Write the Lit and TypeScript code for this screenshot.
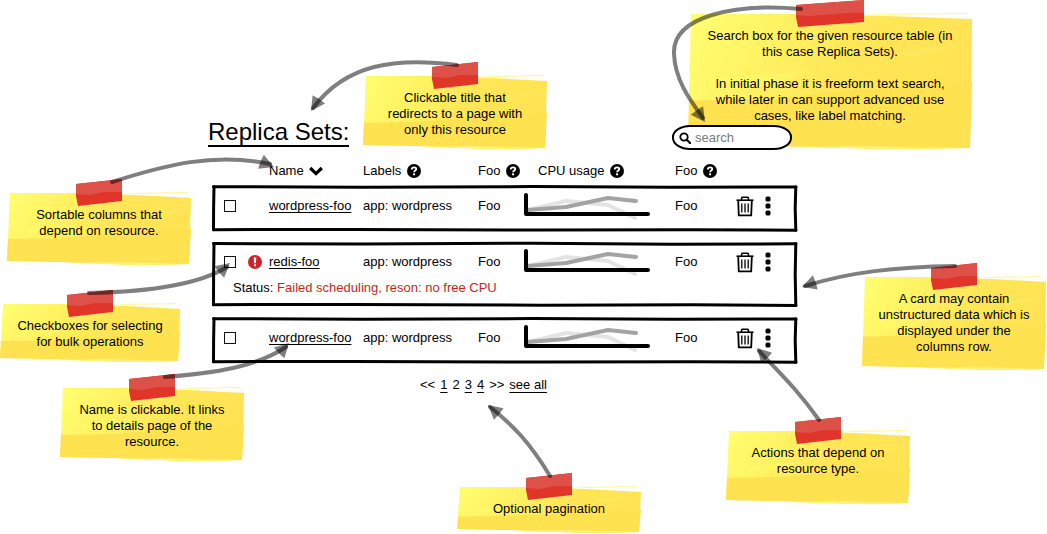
import { LitElement, html, svg, css, nothing } from "lit";
import { customElement, property } from "lit/decorators.js";
import { styleMap } from "lit/directives/style-map.js";

const CANVAS_WIDTH = 1047;
const CANVAS_HEIGHT = 534;

interface NoteData {
  x: number;
  y: number;
  width: number;
  height: number;
  tape: number;
  lines: string[];
}

interface ArrowData {
  path: string;
  tip: [number, number];
  angle: number;
}

interface ResourceRow {
  name: string;
  labels: string;
  foo: string;
  bar: string;
  error?: string;
}

const NOTES: NoteData[] = [
  { x: 363, y: 76, width: 184, height: 73, tape: 46, lines: ["Clickable title that", "redirects to a page with", "only this resource"] },
  {
    x: 688, y: 14, width: 284, height: 135, tape: 68,
    lines: [
      "Search box for the given resource table (in",
      "this case Replica Sets).",
      "",
      "In initial phase it is freeform text search,",
      "while later in can support advanced use",
      "cases, like label matching.",
    ],
  },
  { x: 7, y: 193, width: 184, height: 72, tape: 46, lines: ["Sortable columns that", "depend on resource."] },
  { x: 0, y: 304, width: 180, height: 58, tape: 46, lines: ["Checkboxes for selecting", "for bulk operations"] },
  { x: 60, y: 388, width: 184, height: 73, tape: 46, lines: ["Name is clickable. It links", "to details page of the", "resource."] },
  { x: 862, y: 277, width: 184, height: 93, tape: 46, lines: ["A card may contain", "unstructured data which is", "displayed under the", "columns row."] },
  { x: 726, y: 431, width: 184, height: 73, tape: 46, lines: ["Actions that depend on", "resource type."] },
  { x: 457, y: 487, width: 184, height: 46, tape: 46, lines: ["Optional pagination"] },
];

const ARROWS: ArrowData[] = [
  { path: "M457 65C395 57 346 64 313 108", tip: [311, 111], angle: 124 },
  { path: "M801 9C735 3 672 16 674 54C675 80 690 100 703 118", tip: [705, 122], angle: 55 },
  { path: "M112 182C165 165 215 152 270 164", tip: [274, 167], angle: 22 },
  { path: "M89 293C140 292 195 287 227 267", tip: [230, 263], angle: -40 },
  { path: "M165 377C215 373 256 367 286 347", tip: [289, 343], angle: -45 },
  { path: "M955 266C895 267 850 272 805 286", tip: [802, 287], angle: 161 },
  { path: "M819 420C800 393 785 378 759 351", tip: [757, 348], angle: 226 },
  { path: "M550 476C530 443 514 426 490 407", tip: [488, 405], angle: 220 },
];

const ROWS: ResourceRow[] = [
  { name: "wordpress-foo", labels: "app: wordpress", foo: "Foo", bar: "Foo" },
  { name: "redis-foo", labels: "app: wordpress", foo: "Foo", bar: "Foo", error: "Failed scheduling, reson: no free CPU" },
  { name: "wordpress-foo", labels: "app: wordpress", foo: "Foo", bar: "Foo" },
];

const percent = (value: number) => `${(value / CANVAS_WIDTH) * 100}%`;

@customElement("sticky-note")
export class StickyNote extends LitElement {
  @property({ attribute: false }) note!: NoteData;

  static styles = css`
    :host {
      display: block;
    }
    .note {
      position: relative;
      box-sizing: border-box;
      padding: 14px 0 10px;
      text-align: center;
      line-height: 16px;
    }
    .paper {
      position: absolute;
      inset: 0;
      width: 100%;
      height: 100%;
      overflow: visible;
    }
    .text {
      position: relative;
      margin: 0;
      white-space: pre-line;
    }
  `;

  render() {
    const { width: w, height: h, tape, lines } = this.note;
    const left = w / 2 - tape / 2;
    const right = left + tape;
    return html`
      <div class="note" style=${styleMap({ minHeight: `${h}px` })}>
        <svg class="paper" viewBox="0 0 ${w} ${h}" preserveAspectRatio="none" aria-hidden="true">
          <defs>
            <linearGradient id="sheet" x1="0" y1="0" x2="1" y2="0.25">
              <stop offset="0" stop-color="#ffff70"></stop>
              <stop offset="0.25" stop-color="#fff566"></stop>
              <stop offset="0.65" stop-color="#ffe656"></stop>
              <stop offset="1" stop-color="#ffe352"></stop>
            </linearGradient>
          </defs>
          <path d="M${w * 0.62} 0L${w * 0.97} -1L${w * 0.99} 0L${w * 0.7} 1Z" fill="#fff6a8"></path>
          <path d="M3 0L${w * 0.4} 0L${w * 0.7} 2L${w} 5L${w - 2} ${h - 1}L${w * 0.7} ${h}L${w * 0.3} ${h - 3}L0 ${h - 4}Z" fill="url(#sheet)"></path>
          <path d="M1 ${h * 0.64}L${w * 0.3} ${h * 0.63}L${w * 0.6} ${h * 0.56}L${w} ${h * 0.5}L${w - 2} ${h - 1}L${w * 0.7} ${h}L${w * 0.3} ${h - 3}L0 ${h - 4}Z" fill="#ffe250"></path>
          <path d="M${w * 0.1} ${h * 0.48}L${w * 0.42} ${h * 0.42}L${w * 0.3} ${h * 0.52}L${w * 0.12} ${h * 0.56}Z" fill="#ffff70" opacity="0.35"></path>
          <path d="M${w * 0.74} ${h * 0.28}L${w * 0.98} ${h * 0.2}L${w * 0.94} ${h * 0.25}L${w * 0.78} ${h * 0.32}Z" fill="#ffea60" opacity="0.6"></path>
          <path d="M${w * 0.34} ${h - 2}L${w * 0.6} ${h - 3}L${w * 0.98} ${h - 1}L${w * 0.7} ${h}Z" fill="#fff27c"></path>
          <path d="M${left} -9L${right} -14L${right} 8L${left + 2} 13L${left} 3Z" fill="#e2352a"></path>
          <path d="M${left} -9L${right} -14L${right} -1L${right - 18} -1L${left + 14} 2L${left} 1Z" fill="#dd5148"></path>
        </svg>
        <p class="text">${lines.join("\n")}</p>
      </div>
    `;
  }
}

@customElement("resource-table")
export class ResourceTable extends LitElement {
  @property({ attribute: false }) rows: ResourceRow[] = [];

  static styles = css`
    :host {
      display: block;
    }
    a {
      color: inherit;
      text-decoration: underline;
      text-decoration-skip-ink: none;
      text-underline-offset: 2px;
    }
    .table,
    .head {
      display: block;
    }
    .row {
      display: grid;
      grid-template-columns:
        minmax(0, 57fr) minmax(0, 94fr) minmax(0, 115fr) minmax(0, 45fr)
        minmax(0, 152fr) minmax(0, 61fr) minmax(0, 61fr);
      align-items: center;
      height: 26px;
    }
    .row.titles {
      height: 16px;
      padding-bottom: 6px;
    }
    .cell {
      display: flex;
      align-items: center;
      gap: 6px;
      padding: 0;
      font-weight: 400;
      text-align: left;
      white-space: nowrap;
    }
    .cell.usage {
      padding-left: 15px;
    }
    .cell.select {
      gap: 12px;
      padding-left: 12px;
    }
    .cell.actions {
      gap: 8px;
    }
    .card {
      display: block;
      position: relative;
      padding: 7px 0 14px;
    }
    .card.failed {
      padding-bottom: 12px;
    }
    .card + .card {
      margin-top: 9px;
    }
    .frame {
      position: absolute;
      inset: 0;
      width: 100%;
      height: 100%;
      overflow: visible;
      pointer-events: none;
    }
    .check {
      appearance: none;
      box-sizing: border-box;
      width: 12px;
      height: 12px;
      margin: 0;
      border: 1px solid #111;
      background: #fff;
    }
    .check:checked {
      background: #111;
      box-shadow: inset 0 0 0 2px #fff;
    }
    .status {
      display: block;
      padding: 6px 0 0 21px;
    }
    .status-text {
      display: block;
      padding: 0;
    }
    .reason {
      color: #cc1f23;
    }
    .action,
    .sort {
      display: flex;
      align-items: center;
      gap: 5px;
      padding: 0;
      border: 0;
      background: none;
      color: inherit;
      font: inherit;
      cursor: pointer;
    }
    svg {
      display: block;
      flex: none;
    }
  `;

  private help() {
    return html`<svg width="14" height="14" viewBox="0 0 14 14" aria-hidden="true">
      <circle cx="7" cy="7" r="7"></circle>
      <path d="M4.7 5.5C4.8 3.9 5.9 3.3 7.1 3.3C8.5 3.3 9.3 4.1 9.3 5.1C9.3 6.6 7.1 6.6 7.1 8.3" fill="none" stroke="#fff" stroke-width="1.8"></path>
      <rect x="6.1" y="9.3" width="2" height="2" fill="#fff"></rect>
    </svg>`;
  }

  private frame() {
    return html`<svg class="frame" fill="none" stroke="#000" aria-hidden="true">
      <svg width="100%" height="100%" viewBox="0 0 585 48" preserveAspectRatio="none" overflow="visible">
        <g stroke-width="3" stroke-linecap="round" stroke-linejoin="round">
          <path vector-effect="non-scaling-stroke" d="M1.5 1.8L150 2.2L320 1.6L460 2.4L584 2"></path>
          <path vector-effect="non-scaling-stroke" d="M1.5 45.6L140 45.5L330 46L480 45.6L584 46.2"></path>
          <path vector-effect="non-scaling-stroke" d="M2 1.8L1.6 24L1.5 45.6"></path>
          <path vector-effect="non-scaling-stroke" d="M583.8 2L583.2 24L583.8 46.2"></path>
        </g>
      </svg>
    </svg>`;
  }

  private chart() {
    return html`<svg width="128" height="28" viewBox="0 0 128 28" fill="none" stroke-width="4" role="img" aria-label="CPU usage">
      <path d="M5 18L43 9L85 13L112 26" stroke="#e4e4e4" stroke-linecap="round"></path>
      <path d="M5 18L43 15L85 6L113 9" stroke="#a3a3a3" stroke-linecap="round" stroke-linejoin="round"></path>
      <path d="M3 3V22H125" stroke="#000" stroke-linecap="round" stroke-linejoin="round"></path>
    </svg>`;
  }

  private card(row: ResourceRow) {
    return html`
      <tbody class="card ${row.error ? "failed" : ""}">
        <tr class="row">
          <td class="cell select">
            ${this.frame()}
            <input class="check" type="checkbox" aria-label="Select ${row.name}" />
            ${row.error
              ? html`<svg width="14" height="14" viewBox="0 0 14 14" role="img" aria-label="Error">
                  <circle cx="7" cy="7" r="7" fill="#d22227"></circle>
                  <path d="M5.7 2.5H8.3L7.9 8.3H6.1Z" fill="#fff"></path>
                  <rect x="6" y="9.3" width="2" height="2" fill="#fff"></rect>
                </svg>`
              : nothing}
          </td>
          <td class="cell"><a href="#details">${row.name}</a></td>
          <td class="cell">${row.labels}</td>
          <td class="cell">${row.foo}</td>
          <td class="cell">${this.chart()}</td>
          <td class="cell">${row.bar}</td>
          <td class="cell actions">
            <button class="action" type="button" aria-label="Delete">
              <svg width="18" height="21" viewBox="0 0 18 21" fill="none" stroke="#000" stroke-linejoin="round">
                <path d="M0.5 4.2H17.5" stroke-width="1.6"></path>
                <path d="M5.3 4L6 1.2H12L12.7 4" stroke-width="1.6"></path>
                <path d="M2.2 4.5L2.8 19.4H15.2L15.8 4.5" stroke-width="1.8"></path>
                <path d="M5.8 7.5V16.5M9 7.5V16.5M12.2 7.5V16.5" stroke-width="1.3"></path>
              </svg>
            </button>
            <button class="action" type="button" aria-label="More actions">
              <svg width="12" height="20" viewBox="0 0 12 20">
                <rect x="3.5" y="0.5" width="5" height="5" rx="1.6"></rect>
                <rect x="3.5" y="7.5" width="5" height="5" rx="1.6"></rect>
                <rect x="3.5" y="14.5" width="5" height="5" rx="1.6"></rect>
              </svg>
            </button>
          </td>
        </tr>
        ${row.error
          ? html`<tr class="status">
              <td class="status-text">Status: <span class="reason">${row.error}</span></td>
            </tr>`
          : nothing}
      </tbody>
    `;
  }

  render() {
    return html`
      <table class="table" aria-label="Replica Sets">
        <thead class="head">
          <tr class="row titles">
            <td class="cell"></td>
            <th class="cell" scope="col">
              <button class="sort" type="button">
                Name
                <svg width="14" height="10" viewBox="0 0 14 10" aria-hidden="true">
                  <path d="M1.2 2L7 7.6L12.8 2" fill="none" stroke="#000" stroke-width="3.2"></path>
                </svg>
              </button>
            </th>
            <th class="cell" scope="col">Labels ${this.help()}</th>
            <th class="cell" scope="col">Foo ${this.help()}</th>
            <th class="cell usage" scope="col">CPU usage ${this.help()}</th>
            <th class="cell" scope="col">Foo ${this.help()}</th>
            <td class="cell"></td>
          </tr>
        </thead>
        ${this.rows.map((row) => this.card(row))}
      </table>
    `;
  }
}

@customElement("app-root")
export class AppRoot extends LitElement {
  static styles = css`
    :host {
      display: block;
      background: #fff;
      color: #000;
      font-family: "Liberation Sans", Arial, sans-serif;
      font-size: 13px;
      line-height: 16px;
    }
    .canvas {
      position: relative;
      min-height: 100vh;
      display: grid;
      grid-template-columns: minmax(0, 208fr) minmax(0, 589fr) minmax(0, 250fr);
      align-content: start;
      overflow: hidden;
    }
    .pin {
      position: absolute;
    }
    .panel {
      position: relative;
      grid-column: 2;
      padding-top: 118px;
    }
    .header {
      display: flex;
      justify-content: space-between;
      align-items: flex-end;
      padding-right: 5px;
    }
    .title {
      margin: 0 0 3px;
      font-size: 24px;
      font-weight: 400;
      line-height: 27px;
    }
    .title-link {
      display: block;
      border-bottom: 2px solid #000;
      color: inherit;
      text-decoration: none;
    }
    .search {
      display: flex;
      align-items: center;
      gap: 4px;
      box-sizing: border-box;
      width: 120px;
      height: 25px;
      padding: 0 10px 0 5px;
      border: 2px solid #000;
      border-radius: 18px / 12px;
      background: #fff;
    }
    .search-icon {
      flex: none;
    }
    .search-input {
      flex: 1;
      min-width: 0;
      padding: 0;
      border: 0;
      outline: 0;
      background: none;
      color: inherit;
      font: inherit;
    }
    .search-input::placeholder {
      color: #7c7c7c;
      opacity: 1;
    }
    .resources {
      margin: 13px 0 0 4px;
    }
    .pages {
      display: flex;
      gap: 5px;
      margin: 13px 0 0 36%;
      white-space: nowrap;
    }
    .page {
      color: inherit;
      text-decoration: none;
    }
    .page.marked {
      text-decoration: underline;
      text-decoration-skip-ink: none;
      text-underline-offset: 3px;
    }
    .arrows {
      position: absolute;
      top: 0;
      left: 0;
      width: 100%;
      height: 534px;
      pointer-events: none;
    }
  `;

  render() {
    return html`
      <div class="canvas">
        ${NOTES.map(
          (note) => html`<sticky-note
            class="pin"
            .note=${note}
            style=${styleMap({ left: percent(note.x), top: `${note.y}px`, width: percent(note.width) })}
          ></sticky-note>`
        )}
        <main class="panel">
          <header class="header">
            <h1 class="title"><a class="title-link" href="#replica-sets">Replica Sets:</a></h1>
            <label class="search">
              <svg class="search-icon" width="12" height="12" viewBox="0 0 12 12" fill="none" stroke="#000" aria-hidden="true">
                <circle cx="5" cy="5" r="3.7" stroke-width="1.8"></circle>
                <path d="M7.8 7.8L11 11" stroke-width="2.2" stroke-linecap="round"></path>
              </svg>
              <input class="search-input" type="text" placeholder="search" aria-label="Search replica sets" />
            </label>
          </header>
          <resource-table class="resources" .rows=${ROWS}></resource-table>
          <nav class="pages" aria-label="Pagination">
            <a class="page" href="#first">&lt;&lt;</a>
            <a class="page marked" href="#1">1</a>
            <span class="page">2</span>
            <a class="page marked" href="#3">3</a>
            <a class="page marked" href="#4">4</a>
            <a class="page" href="#last">&gt;&gt;</a>
            <a class="page marked" href="#all">see all</a>
          </nav>
        </main>
        <svg class="arrows" viewBox="0 0 ${CANVAS_WIDTH} ${CANVAS_HEIGHT}" preserveAspectRatio="none" aria-hidden="true">
          ${ARROWS.map(
            ({ path, tip, angle }) => svg`
              <path d=${path} fill="none" stroke="#000" stroke-opacity="0.5" stroke-width="4" stroke-linecap="round"></path>
              <path d="M0 0L-14 -7.5Q-15 0 -14 7.5Z" fill="#000" fill-opacity="0.5" transform="translate(${tip[0]} ${tip[1]}) rotate(${angle})"></path>
            `
          )}
        </svg>
      </div>
    `;
  }
}
